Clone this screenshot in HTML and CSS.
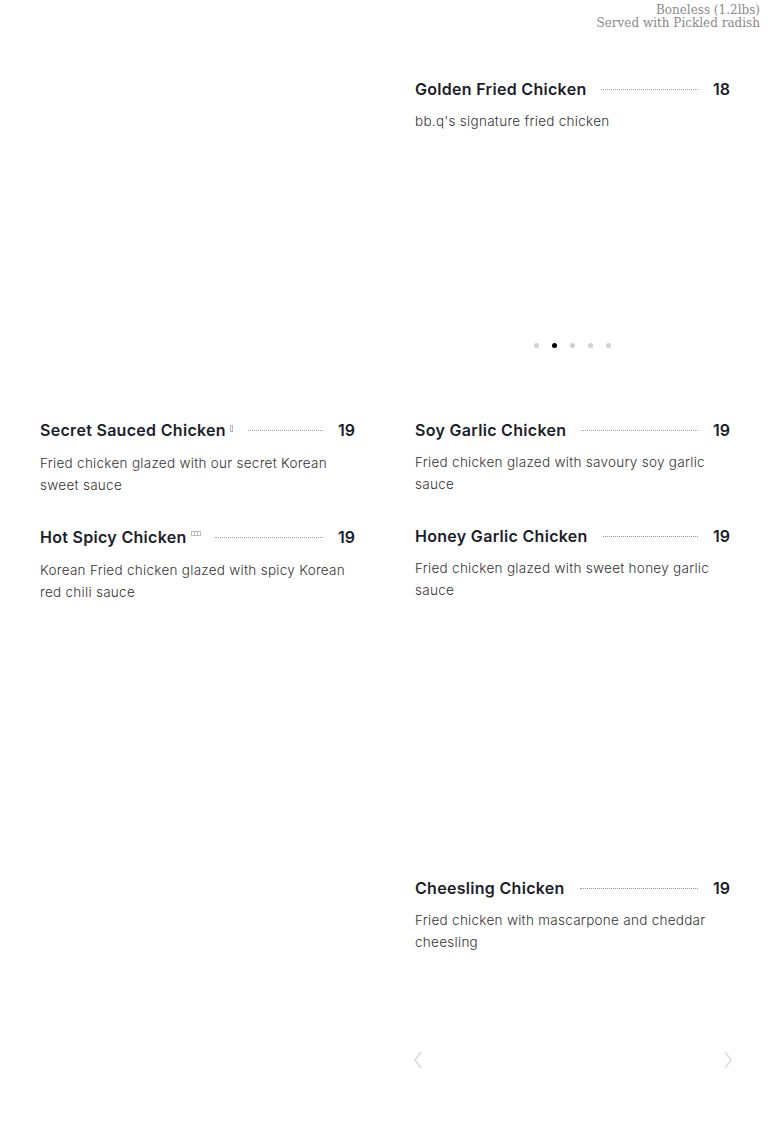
FILE: index.html
```html
<!DOCTYPE html>
<html>
<head>
<meta charset="utf-8">
<link rel="stylesheet" href="styles.css">
</head>
<body>
<header class="note">
  <div>Boneless (1.2lbs)</div>
  <div>Served with Pickled radish</div>
</header>
<main class="menu">
  <section class="row row-1">
    <div class="cell"></div>
    <div class="cell">
      <div class="item">
        <div class="item-head"><span class="title">Golden Fried Chicken</span><span class="leader"></span><span class="price">18</span></div>
        <p class="desc">bb.q's signature fried chicken</p>
      </div>
      <div class="pager">
        <span class="dot"></span><span class="dot active"></span><span class="dot"></span><span class="dot"></span><span class="dot"></span>
      </div>
    </div>
  </section>
  <section class="row row-2">
    <div class="cell cell-left">
      <div class="item">
        <div class="item-head"><span class="title">Secret Sauced Chicken</span><span class="tofu tofu-1"></span><span class="leader"></span><span class="price">19</span></div>
        <p class="desc">Fried chicken glazed with our secret Korean sweet sauce</p>
      </div>
      <div class="item">
        <div class="item-head"><span class="title">Hot Spicy Chicken</span><span class="tofu tofu-3"><i></i><i></i><i></i></span><span class="leader"></span><span class="price">19</span></div>
        <p class="desc">Korean Fried chicken glazed with spicy Korean red chili sauce</p>
      </div>
    </div>
    <div class="cell">
      <div class="item">
        <div class="item-head"><span class="title">Soy Garlic Chicken</span><span class="leader"></span><span class="price">19</span></div>
        <p class="desc">Fried chicken glazed with savoury soy garlic sauce</p>
      </div>
      <div class="item">
        <div class="item-head"><span class="title">Honey Garlic Chicken</span><span class="leader"></span><span class="price">19</span></div>
        <p class="desc">Fried chicken glazed with sweet honey garlic sauce</p>
      </div>
    </div>
  </section>
  <section class="row row-3">
    <div class="cell"></div>
    <div class="cell">
      <div class="item">
        <div class="item-head"><span class="title">Cheesling Chicken</span><span class="leader"></span><span class="price">19</span></div>
        <p class="desc">Fried chicken with mascarpone and cheddar cheesling</p>
      </div>
      <div class="arrows">
        <svg class="chev" width="10" height="18" viewBox="0 0 10 18"><polyline points="8,1 2,9 8,17" fill="none" stroke="#dcdcdc" stroke-width="1.6"/></svg>
        <svg class="chev" width="10" height="18" viewBox="0 0 10 18"><polyline points="2,1 8,9 2,17" fill="none" stroke="#dcdcdc" stroke-width="1.6"/></svg>
      </div>
    </div>
  </section>
</main>
</body>
</html>
```

FILE: styles.css
```css
* { box-sizing: border-box; }
html, body { margin: 0; padding: 0; background: #fff; }
body {
  width: 770px;
  min-height: 1127px;
  font-family: "Inter", "Noto Sans", sans-serif;
  color: #1b1e2a;
}
.note {
  font-family: "DejaVu Serif", "Liberation Serif", serif;
  font-size: 12px;
  line-height: 13px;
  color: #8a8a8a;
  text-align: right;
  padding: 4px 10px 0 0;
  height: 30px;
}
.menu {
  padding: 0 40px;
}
.row {
  display: grid;
  grid-template-columns: 315px 315px;
  column-gap: 60px;
}
.row-1 { margin-top: 47px; }
.row-2 { margin-top: 69px; }
.row-3 { margin-top: 273px; }
.item + .item { margin-top: 29px; }
.item-head {
  display: flex;
  align-items: center;
  height: 24px;
}
.title {
  font-size: 16px;
  font-weight: 600;
  line-height: 24px;
  color: #1b1e2a;
  white-space: nowrap;
  letter-spacing: 0.3px;
}
.leader {
  flex: 1;
  margin: 0 15px;
  border-top: 1px dotted #9a9a9a;
  height: 0;
}
.price {
  font-size: 16px;
  font-weight: 600;
  line-height: 24px;
  color: #1b1e2a;
  min-width: 15px;
  text-align: right;
}
.desc {
  margin: 9px 0 0;
  font-size: 13.5px;
  font-weight: 300;
  line-height: 22px;
  color: #333;
  letter-spacing: 0.28px;
}
.cell-left .desc { margin-top: 10px; }
.tofu {
  display: inline-flex;
  align-self: flex-start;
  margin-top: 7px;
  margin-left: 4px;
}
.tofu-1 {
  width: 3px;
  height: 7px;
  border: 1px solid #b5b5b5;
}
.tofu-3 {
  height: 5px;
  margin-top: 6px;
}
.tofu-3 i {
  display: block;
  width: 4px;
  height: 5px;
  border: 1px solid #bdbdbd;
  margin-right: -1px;
}
.pager {
  display: flex;
  justify-content: center;
  gap: 13px;
  margin-top: 211px;
  height: 6px;
}
.dot {
  width: 5px;
  height: 5px;
  border-radius: 50%;
  background: #cfcfcf;
}
.dot.active { background: #000; }
.arrows {
  display: flex;
  justify-content: space-between;
  margin: 98px -3px 0 -2px;
}
.chev { display: block; }
```
